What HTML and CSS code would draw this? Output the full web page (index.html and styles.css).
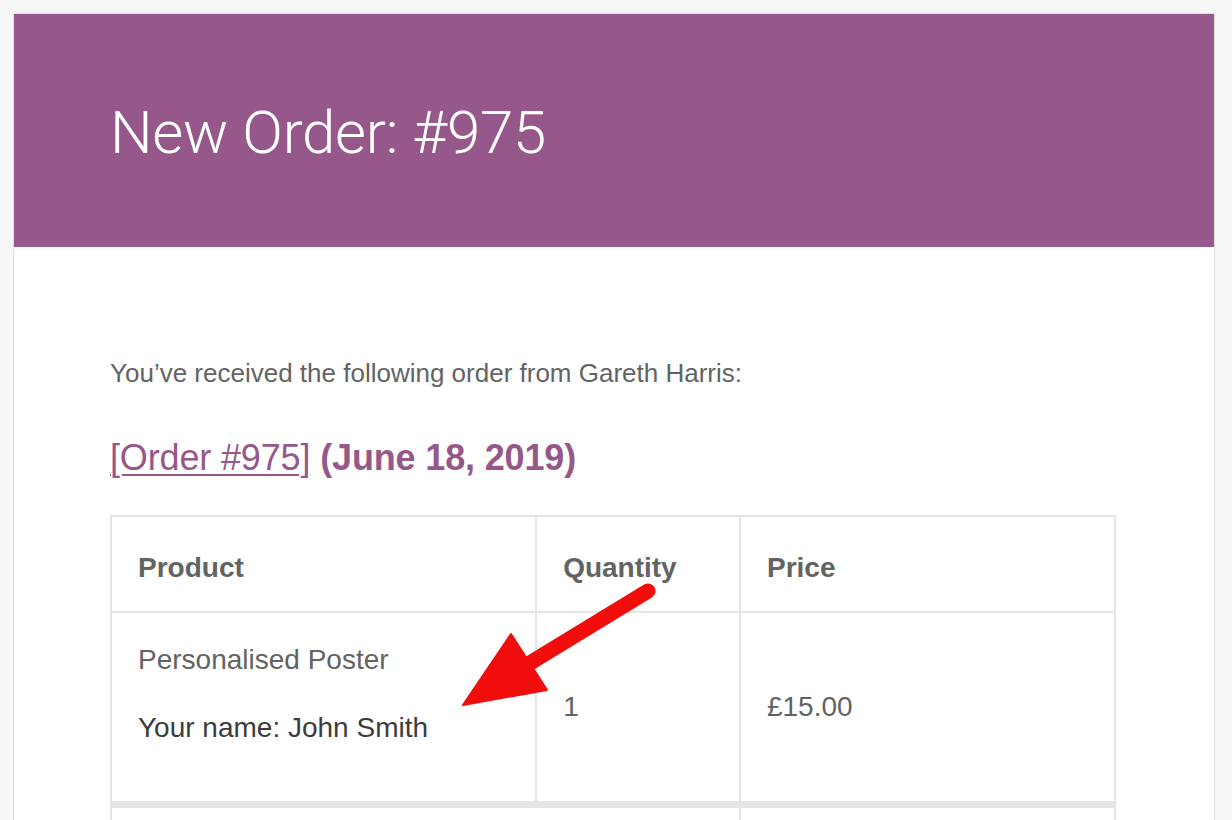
FILE: index.html
```html
<!DOCTYPE html>
<html lang="en">
<head>
<meta charset="utf-8">
<title>New Order: #975</title>
<link rel="stylesheet" href="styles.css">
</head>
<body>
<div class="page">
  <div class="email">
    <header class="email-header">
      <h1 class="email-title">New Order: #975</h1>
    </header>
    <main class="email-body">
      <p class="intro">You’ve received the following order from Gareth Harris:</p>
      <h2 class="order-heading"><a class="order-link" href="#">[Order #975]</a> <span class="order-date">(June 18, 2019)</span></h2>
      <table class="order-table">
        <colgroup>
          <col class="col-product">
          <col class="col-qty">
          <col class="col-price">
        </colgroup>
        <thead>
          <tr>
            <th>Product</th>
            <th>Quantity</th>
            <th>Price</th>
          </tr>
        </thead>
        <tbody>
          <tr>
            <td class="cell-product">
              <div class="item-name">Personalised Poster</div>
              <div class="item-meta">Your name: John Smith</div>
            </td>
            <td class="cell-mid">1</td>
            <td class="cell-mid">£15.00</td>
          </tr>
        </tbody>
        <tfoot>
          <tr>
            <th colspan="2"></th>
            <td></td>
          </tr>
        </tfoot>
      </table>
    </main>
  </div>
  <svg class="annotation" width="1232" height="820" viewBox="0 0 1232 820" aria-hidden="true">
    <line x1="648" y1="591" x2="525" y2="666" stroke="#f20d0d" stroke-width="15" stroke-linecap="round"/>
    <polygon points="463,705 511,634 547,690" fill="#f20d0d" stroke="#f20d0d" stroke-width="2" stroke-linejoin="round"/>
  </svg>
</div>
</body>
</html>
```
FILE: styles.css
```css
html, body {
  margin: 0;
  padding: 0;
  background: #f7f7f7;
  height: 100%;
  overflow: hidden;
}

.page {
  position: relative;
  width: 1232px;
  height: 820px;
  padding: 13px 0 0 13px;
  box-sizing: border-box;
}

.email {
  width: 1202px;
  box-sizing: border-box;
  background: #ffffff;
  border: 1px solid #dedede;
  border-bottom: none;
  min-height: 820px;
}

.email-header {
  background: #96588a;
  height: 233px;
  display: flex;
  align-items: center;
  padding: 0 96px;
}

.email-title {
  margin: 0;
  color: #ffffff;
  font-family: "Helvetica Neue", Roboto, "Liberation Sans", Arial, sans-serif;
  font-weight: 300;
  font-size: 60px;
  line-height: 1;
  padding-top: 4px;
  letter-spacing: -0.3px;
}

.email-body {
  padding: 108px 96px 0 96px;
  font-family: "Liberation Sans", Arial, Helvetica, sans-serif;
  color: #636363;
}

.intro {
  margin: 0;
  font-size: 26px;
  line-height: 36px;
}

.order-heading {
  margin: 47px 0 0 0;
  font-size: 36px;
  line-height: 40px;
  color: #96588a;
  font-weight: 700;
  letter-spacing: -0.15px;
}

.order-link {
  color: #96588a;
  font-weight: 400;
  text-decoration: underline;
  text-decoration-thickness: 2px;
  text-underline-offset: 4px;
}

.order-table {
  margin-top: 37px;
  width: 1006px;
  border-collapse: collapse;
  border: 2px solid #e5e5e5;
  font-size: 28px;
  color: #636363;
}

.col-product { width: 426px; }
.col-qty { width: 204px; }
.col-price { width: 376px; }

.order-table th,
.order-table td {
  border: 2px solid #e5e5e5;
  text-align: left;
  padding: 0 26px;
}

.order-table thead th {
  height: 96px;
  font-weight: 700;
  vertical-align: middle;
  padding-top: 8px;
  box-sizing: border-box;
}

.cell-product {
  vertical-align: top;
  padding-top: 30px !important;
  padding-bottom: 56px !important;
}

.item-name {
  line-height: 34px;
}

.item-meta {
  margin-top: 34px;
  line-height: 34px;
  color: #3c3c3c;
}

.cell-mid {
  vertical-align: middle;
  padding-bottom: 0 !important;
}

.order-table tfoot th,
.order-table tfoot td {
  border-top: 7px solid #e5e5e5;
  height: 92px;
  font-weight: 700;
}

.annotation {
  position: absolute;
  top: 0;
  left: 0;
  pointer-events: none;
}
```
